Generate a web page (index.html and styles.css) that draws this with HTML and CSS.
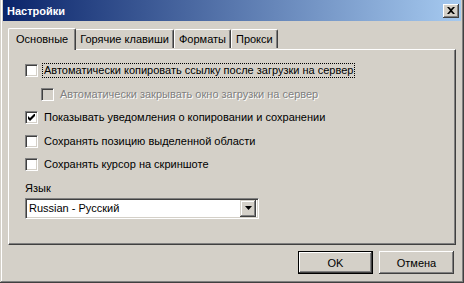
FILE: index.html
```html
<!DOCTYPE html>
<html>
<head>
<meta charset="utf-8">
<link rel="stylesheet" href="styles.css">
</head>
<body>
<div class="window">
  <div class="titlebar">
    <span class="title">Настройки</span>
    <span class="close"><svg width="8" height="7" viewBox="0 0 8 7"><path d="M0 0h2l2 2 2-2h2L5 3.5 8 7H6L4 5 2 7H0l3-3.5z" fill="#000"/></svg></span>
  </div>
  <div class="content">
    <div class="tabs">
      <div class="tab active">Основные</div>
      <div class="tab">Горячие клавиши</div>
      <div class="tab">Форматы</div>
      <div class="tab">Прокси</div>
    </div>
    <div class="panel">
      <div class="row"><span class="cb"></span><span class="lbl focus">Автоматически копировать ссылку после загрузки на сервер</span></div>
      <div class="row sub disabled"><span class="cb"></span><span class="lbl">Автоматически закрывать окно загрузки на сервер</span></div>
      <div class="row"><span class="cb"><svg width="7" height="7" viewBox="0 0 7 7"><path d="M0 2v3l2 2 5-5V-1L2 4z" fill="#000"/></svg></span><span class="lbl">Показывать уведомления о копировании и сохранении</span></div>
      <div class="row"><span class="cb"></span><span class="lbl">Сохранять позицию выделенной области</span></div>
      <div class="row"><span class="cb"></span><span class="lbl">Сохранять курсор на скриншоте</span></div>
      <div class="lang">Язык</div>
      <div class="combo">
        <span class="combo-text">Russian - Русский</span>
        <span class="combo-btn"><svg width="7" height="4" viewBox="0 0 7 4"><path d="M0 0h7L3.5 4z" fill="#000"/></svg></span>
      </div>
    </div>
    <div class="buttons">
      <div class="btn default">OK</div>
      <div class="btn">Отмена</div>
    </div>
  </div>
</div>
</body>
</html>
```
FILE: styles.css
```css
* { box-sizing: border-box; }
html, body { margin: 0; padding: 0; }
body {
  background: #D4D0C8;
  font-family: "Liberation Sans", Arial, sans-serif;
  font-size: 11px;
  color: #000;
}
.window {
  width: 464px;
  height: 283px;
  background: #D4D0C8;
  padding: 0 3px 3px 3px;
  box-shadow: inset -1px -1px #404040, inset 1px 0 #D4D0C8, inset -2px -2px #808080, inset 2px 0 #FFFFFF;
  display: flex;
  flex-direction: column;
}
.titlebar {
  height: 21px;
  background: linear-gradient(to right, #0A246A, #A6CAF0);
  display: flex;
  align-items: center;
  justify-content: space-between;
  padding: 0 2px 0 4px;
}
.title {
  color: #fff;
  font-weight: bold;
  font-size: 11px;
}
.close {
  width: 16px;
  height: 14px;
  background: #D4D0C8;
  box-shadow: inset -1px -1px #404040, inset 1px 1px #FFFFFF, inset -2px -2px #808080;
  display: flex;
  align-items: center;
  justify-content: center;
  padding-bottom: 1px;
}
.content {
  flex: 1;
  padding: 7px 5px 0 5px;
  display: flex;
  flex-direction: column;
}
.tabs {
  display: flex;
  align-items: flex-end;
  height: 21px;
  padding-left: 2px;
  position: relative;
  z-index: 1;
}
.tab {
  height: 19px;
  padding: 0 4px 0 4px;
  display: flex;
  align-items: center;
  background: #D4D0C8;
  border-top: 1px solid #FFFFFF;
  border-left: 1px solid #FFFFFF;
  border-right: 1px solid #404040;
  box-shadow: inset -1px 0 #808080;
  border-radius: 2px 2px 0 0;
  margin-bottom: 1px;
}
.tab.active {
  height: 22px;
  margin-left: -2px;
  margin-right: -1px;
  padding: 0 7px 2px 7px;
  margin-bottom: -1px;
  z-index: 2;
  position: relative;
}
.panel {
  width: 448px;
  height: 196px;
  border-top: 1px solid #FFFFFF;
  border-left: 1px solid #FFFFFF;
  border-right: 1px solid #404040;
  border-bottom: 1px solid #404040;
  box-shadow: inset -1px -1px #808080;
  padding: 9px 0 0 16px;
  display: flex;
  flex-direction: column;
}
.row {
  height: 23.5px;
  display: flex;
  align-items: center;
}
.row.sub { padding-left: 16px; }
.cb {
  width: 13px;
  height: 13px;
  background: #fff;
  border-top: 1px solid #808080;
  border-left: 1px solid #808080;
  border-right: 1px solid #FFFFFF;
  border-bottom: 1px solid #FFFFFF;
  box-shadow: inset 1px 1px #404040, inset -1px -1px #D4D0C8;
  display: flex;
  align-items: center;
  justify-content: center;
  margin-right: 4px;
  flex: none;
}
.disabled .cb { background: #D4D0C8; }
.disabled .lbl { color: #808080; text-shadow: 1px 1px #FFFFFF; }
.lbl { padding: 0 1px; line-height: 13px; border: 1px dotted transparent; }
.lbl.focus { border-color: #000; }
.lang {
  margin-top: 5px;
  height: 13px;
  line-height: 13px;
}
.combo {
  margin-top: 3px;
  width: 234px;
  height: 21px;
  background: #fff;
  border-top: 1px solid #808080;
  border-left: 1px solid #808080;
  border-right: 1px solid #FFFFFF;
  border-bottom: 1px solid #FFFFFF;
  box-shadow: inset 1px 1px #404040, inset -1px -1px #D4D0C8;
  display: flex;
  align-items: center;
  justify-content: space-between;
  padding: 2px;
}
.combo-text { padding-left: 1px; }
.combo-btn {
  width: 16px;
  height: 17px;
  background: #D4D0C8;
  box-shadow: inset -1px -1px #404040, inset 1px 1px #D4D0C8, inset -2px -2px #808080, inset 2px 2px #FFFFFF;
  display: flex;
  align-items: center;
  justify-content: center;
}
.buttons {
  display: flex;
  justify-content: flex-end;
  gap: 6px;
  padding: 6px 2px 0 0;
}
.btn {
  width: 75px;
  height: 23px;
  display: flex;
  align-items: center;
  justify-content: center;
  background: #D4D0C8;
  box-shadow: inset -1px -1px #404040, inset 1px 1px #FFFFFF, inset -2px -2px #808080;
}
.btn.default {
  border: 1px solid #000;
}
```
